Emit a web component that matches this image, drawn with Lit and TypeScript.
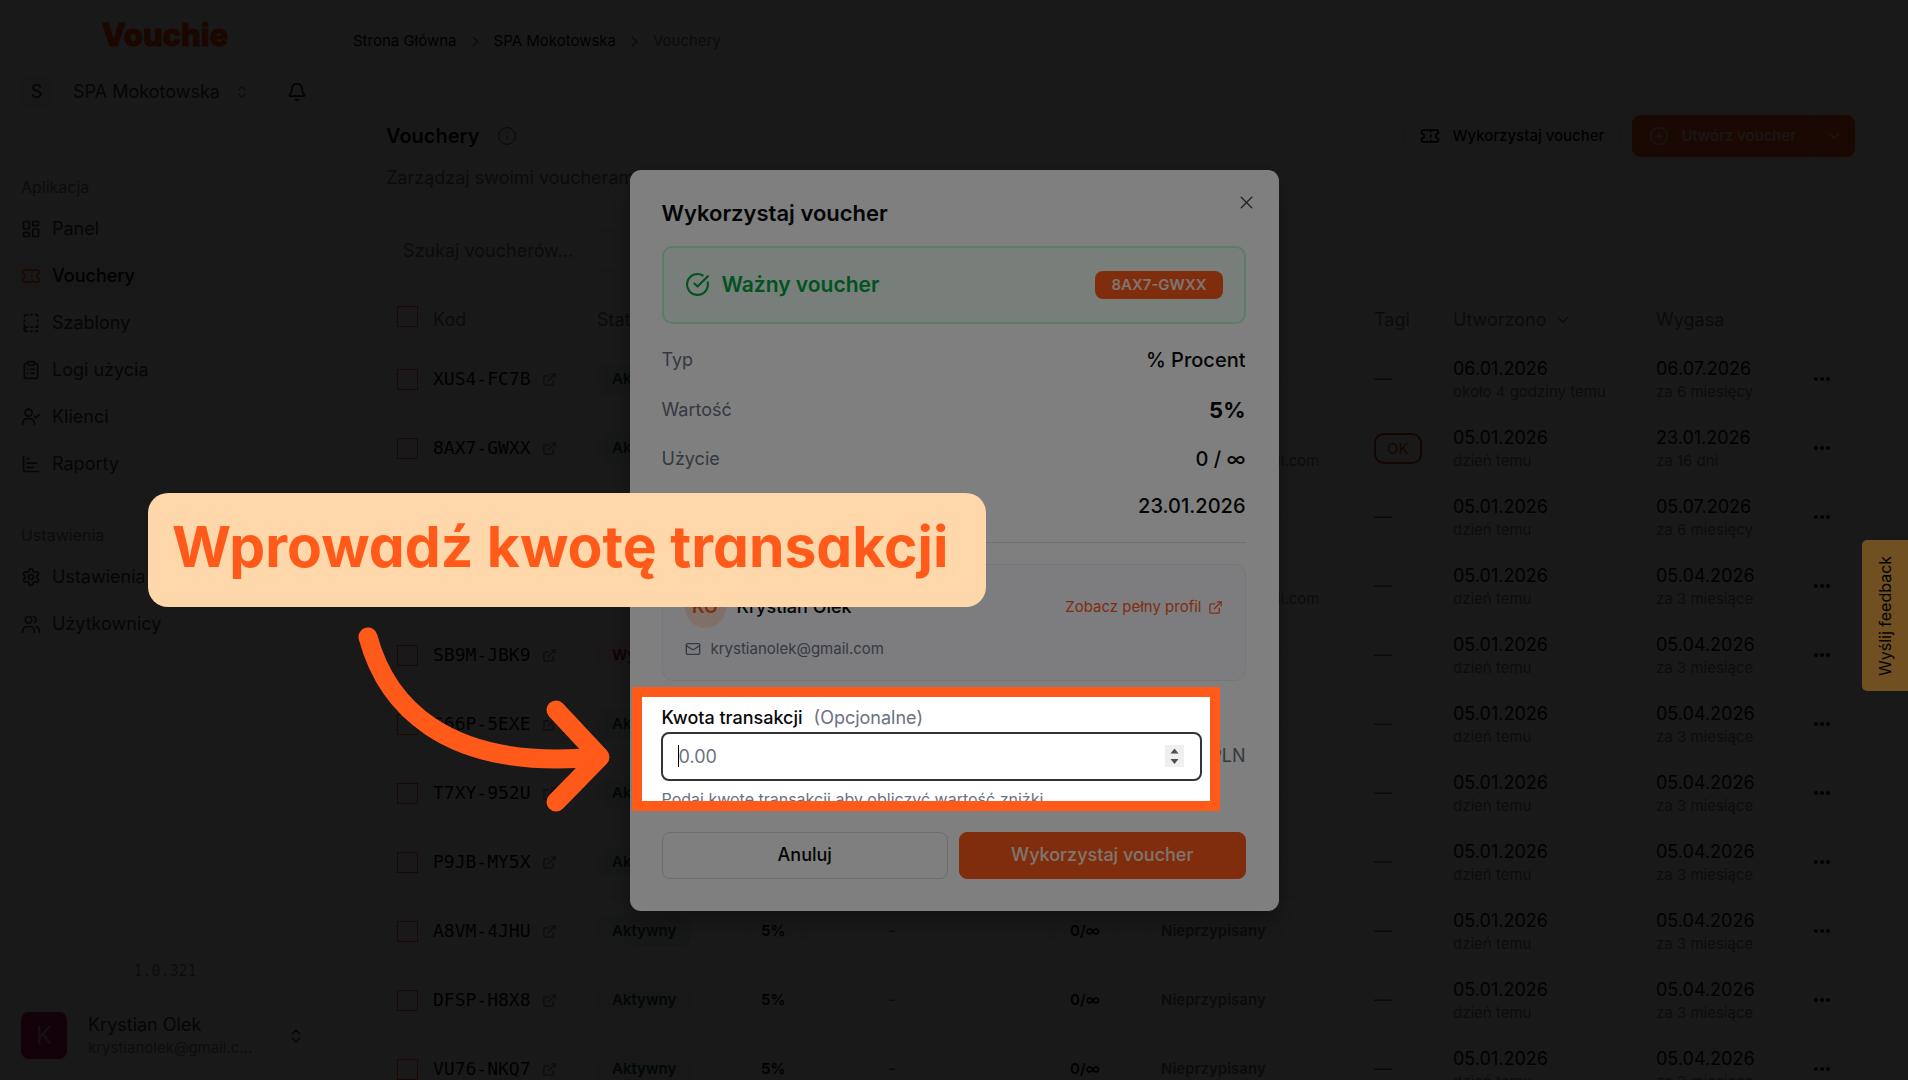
import { LitElement, html, css, svg } from 'lit';
import { customElement } from 'lit/decorators.js';
import { classMap } from 'lit/directives/class-map.js';

const paths: Record<string, string[]> = {
  dashboard: ['M4 3h5a1 1 0 0 1 1 1v7a1 1 0 0 1-1 1H4a1 1 0 0 1-1-1V4a1 1 0 0 1 1-1z', 'M15 3h5a1 1 0 0 1 1 1v3a1 1 0 0 1-1 1h-5a1 1 0 0 1-1-1V4a1 1 0 0 1 1-1z', 'M15 12h5a1 1 0 0 1 1 1v7a1 1 0 0 1-1 1h-5a1 1 0 0 1-1-1v-7a1 1 0 0 1 1-1z', 'M4 16h5a1 1 0 0 1 1 1v3a1 1 0 0 1-1 1H4a1 1 0 0 1-1-1v-3a1 1 0 0 1 1-1z'],
  ticket: ['M2 9a3 3 0 0 1 0 6v2a2 2 0 0 0 2 2h16a2 2 0 0 0 2-2v-2a3 3 0 0 1 0-6V7a2 2 0 0 0-2-2H4a2 2 0 0 0-2 2Z', 'M13 5v2', 'M13 17v2', 'M13 11v2'],
  template: ['M12 17h1.5', 'M12 22h1.5', 'M12 2h1.5', 'M17.5 22H19a1 1 0 0 0 1-1', 'M17.5 2H19a1 1 0 0 1 1 1v1.5', 'M20 14v3h-2.5', 'M20 8.5V10', 'M4 10V8.5', 'M4 19.5V14', 'M4 4.5A2.5 2.5 0 0 1 6.5 2H8', 'M8 22H6.5a1 1 0 0 1 0-5H8'],
  clipboard: ['M9 2h6a1 1 0 0 1 1 1v2a1 1 0 0 1-1 1H9a1 1 0 0 1-1-1V3a1 1 0 0 1 1-1z', 'M16 4h2a2 2 0 0 1 2 2v14a2 2 0 0 1-2 2H6a2 2 0 0 1-2-2V6a2 2 0 0 1 2-2h2', 'M12 11h4', 'M12 16h4', 'M8 11h.01', 'M8 16h.01'],
  client: ['M2 21v-2a6 6 0 0 1 6-5h2a6 6 0 0 1 6 5v2', 'M9 2.500a4 4 0 1 0 0 8.500a4 4 0 0 0 0-8.500', 'm16 11 2 2 4-4'],
  chart: ['M3 3v16a2 2 0 0 0 2 2h16', 'M7 16h8', 'M7 11h12', 'M7 6h3'],
  settings: ['M12.220 2h-.44a2 2 0 0 0-2 2v.18a2 2 0 0 1-1 1.73l-.43.25a2 2 0 0 1-2 0l-.15-.08a2 2 0 0 0-2.730.73l-.22.38a2 2 0 0 0 .73 2.730l.15.1a2 2 0 0 1 1 1.720v.51a2 2 0 0 1-1 1.740l-.15.09a2 2 0 0 0-.73 2.730l.22.38a2 2 0 0 0 2.730.73l.15-.08a2 2 0 0 1 2 0l.43.25a2 2 0 0 1 1 1.730V20a2 2 0 0 0 2 2h.44a2 2 0 0 0 2-2v-.18a2 2 0 0 1 1-1.730l.43-.25a2 2 0 0 1 2 0l.15.08a2 2 0 0 0 2.730-.73l.22-.39a2 2 0 0 0-.73-2.730l-.15-.08a2 2 0 0 1-1-1.740v-.5a2 2 0 0 1 1-1.740l.15-.09a2 2 0 0 0 .73-2.730l-.22-.38a2 2 0 0 0-2.730-.73l-.15.08a2 2 0 0 1-2 0l-.43-.25a2 2 0 0 1-1-1.730V4a2 2 0 0 0-2-2z', 'M12 9a3 3 0 1 0 0 6a3 3 0 0 0 0-6'],
  users: ['M2 22v-2a6 6 0 0 1 6-5h2a6 6 0 0 1 6 5v2', 'M9 3a4 4 0 1 0 0 8a4 4 0 0 0 0-8', 'M15 3a4 4 0 0 1 1 7.500', 'M18 15a6 6 0 0 1 4 5v2'],
  bell: ['M10.268 21a2 2 0 0 0 3.464 0', 'M3.262 15.326A1 1 0 0 0 4 17h16a1 1 0 0 0 .74-1.673C19.410 13.956 18 12.499 18 8A6 6 0 0 0 6 8c0 4.499-1.411 5.956-2.738 7.326'],
  updown: ['m7 15 5 5 5-5', 'm7 9 5-5 5 5'],
  right: ['m9 18 6-6-6-6'],
  down: ['m6 9 6 6 6-6'],
  info: ['M12 2a10 10 0 1 0 0 20a10 10 0 0 0 0-20', 'M12 16v-4', 'M12 8h.01'],
  plus: ['M12 2a10 10 0 1 0 0 20a10 10 0 0 0 0-20', 'M8 12h8', 'M12 8v8'],
  external: ['M15 3h6v6', 'M10 14 21 3', 'M18 13v6a2 2 0 0 1-2 2H5a2 2 0 0 1-2-2V8a2 2 0 0 1 2-2h6'],
  check: ['M21.801 10A10 10 0 1 1 17 3.335', 'm9 11 3 3L22 4'],
  close: ['M18 6 6 18', 'm6 6 12 12'],
  mail: ['M4 4h16a2 2 0 0 1 2 2v12a2 2 0 0 1-2 2H4a2 2 0 0 1-2-2V6a2 2 0 0 1 2-2z', 'm22 7-8.970 5.700a1.940 1.940 0 0 1-2.060 0L2 7'],
};

const icon = (name: string, size = 20, width = 2) => html`<svg width=${size} height=${size} viewBox="0 0 24 24"
  fill="none" stroke="currentColor" stroke-width=${width} stroke-linecap="round" stroke-linejoin="round"
  aria-hidden="true">${paths[name].map((d) => svg`<path d=${d}></path>`)}</svg>`;

const reset = css`
  * { box-sizing: border-box; }
  svg { display: block; flex: none; }
  a { color: inherit; text-decoration: none; }
  button, input { font: inherit; color: inherit; margin: 0; }
  button { display: flex; align-items: center; background: none; border: 0; padding: 0; cursor: pointer; }
  h1, h2, p, ol, ul, dl, dd { margin: 0; padding: 0; }
  li { list-style: none; }
`;

@customElement('side-bar')
class SideBar extends LitElement {
  static styles = [reset, css`
    :host { display: flex; flex-direction: column; width: 331px; flex: none; padding: 18px 10px 21px;
      border-right: 1px solid #e4e4e7; background: #fafafa; color: #3f3f46; font-size: 18px; line-height: 24px; }
    .logo { align-self: center; font-size: 31px; line-height: 34px; font-weight: 800; color: #ff4d00;
      -webkit-text-stroke: 1px #ff4d00; stroke-linejoin: round; }
    .org { display: flex; align-items: center; margin: 24px 11px 0; height: 31px; }
    .switch { gap: 14px; }
    .letter { display: grid; place-items: center; width: 31px; height: 31px; margin-right: 7px; border-radius: 6px; background: #f1f1f3; color: #18181b; }
    .soft { color: #85858d; }
    .bell { margin-left: auto; margin-right: 2px; color: #18181b; }
    .label { margin: 41px 11px 11px; font-size: 16px; line-height: 20px; color: #7a7a82; }
    .label.first { margin-top: 70px; }
    .nav { display: flex; flex-direction: column; gap: 6px; }
    .item { display: flex; align-items: center; gap: 11px; height: 41px; padding: 0 11px; border-radius: 8px; }
    .item.active { background: #f1f1f3; color: #09090b; font-weight: 500; }
    .item.active svg { color: #ff5a1a; }
    .version { margin-top: auto; text-align: center; font: 15px/20px "DejaVu Sans Mono", monospace; color: #85858d; }
    .user { margin: 31px 11px 0; height: 47px; gap: 21px; text-align: left; }
    .avatar { display: grid; place-items: center; width: 46px; height: 47px; border-radius: 8px; background: #c2185b; color: #d8a0b8; font-size: 24px; }
    .who { flex: 1; min-width: 0; }
    .mail { display: block; font-size: 15px; line-height: 21px; color: #85858d; }
    .user svg { margin-right: 4px; margin-left: -21px; }
  `];
  main = [['dashboard', 'Panel'], ['ticket', 'Vouchery'], ['template', 'Szablony'], ['clipboard', 'Logi użycia'], ['client', 'Klienci'], ['chart', 'Raporty']];
  more = [['settings', 'Ustawienia'], ['users', 'Użytkownicy']];
  links(items: string[][]) {
    return html`<nav class="nav">${items.map(([i, t]) => html`
      <a href="#" class=${classMap({ item: true, active: t === 'Vouchery' })}>${icon(i)}<span>${t}</span></a>`)}</nav>`;
  }
  render() {
    return html`
      <a href="#" class="logo">Vouchie</a>
      <div class="org">
        <button class="switch"><span class="letter">S</span><span>SPA Mokotowska</span><span class="soft">${icon('updown', 16)}</span></button>
        <button class="bell" aria-label="Powiadomienia">${icon('bell')}</button>
      </div>
      <div class="label first">Aplikacja</div>
      ${this.links(this.main)}
      <div class="label">Ustawienia</div>
      ${this.links(this.more)}
      <div class="version">1.0.321</div>
      <button class="user"><span class="avatar">K</span>
        <span class="who">Krystian Olek<span class="mail">krystianolek@gmail.c...</span></span>${icon('updown', 18)}</button>`;
  }
}

interface Voucher { code: string; created: string; ago: string; expires: string; left: string; expired?: boolean; client?: boolean; tag?: string }
const vouchers: Voucher[] = [
  { code: 'XUS4-FC7B', created: '06.01.2026', ago: 'około 4 godziny temu', expires: '06.07.2026', left: 'za 6 miesięcy' },
  { code: '8AX7-GWXX', created: '05.01.2026', ago: 'dzień temu', expires: '23.01.2026', left: 'za 16 dni', client: true, tag: 'OK' },
  { code: 'M3KD-7PQA', created: '05.01.2026', ago: 'dzień temu', expires: '05.07.2026', left: 'za 6 miesięcy' },
  { code: 'R5TN-2WLE', created: '05.01.2026', ago: 'dzień temu', expires: '05.04.2026', left: 'za 3 miesiące', client: true },
  ...['SB9M-JBK9', 'S66P-5EXE', 'T7XY-952U', 'P9JB-MY5X', 'A8VM-4JHU', 'DFSP-H8X8', 'VU76-NKQ7'].map((code, i) => ({
    code, created: '05.01.2026', ago: 'dzień temu', expires: '05.04.2026', left: 'za 3 miesiące', expired: i === 0,
  })),
];

@customElement('voucher-table')
class VoucherTable extends LitElement {
  static styles = [reset, css`
    :host { display: block; }
    table { width: 100%; table-layout: fixed; border-collapse: separate; border-spacing: 0; border: 1px solid #e9e9ec; border-radius: 8px; font-size: 18px; line-height: 26px; }
    th { height: 51px; padding: 3px 0 0 10px; text-align: left; font-weight: 400; color: #71717a; }
    td { height: 69px; padding: 0 0 0 10px; border-top: 1px solid #e9e9ec; color: #09090b; white-space: nowrap; }
    input { appearance: none; display: block; width: 21px; height: 21px; border: 1px solid #ff5a1a; }
    th input { margin-bottom: 8px; }
    .c1 { width: 36px; } .c2 { width: 164px; } .c3 { width: 149px; } .c4 { width: 142px; } .c5 { width: 167px; } .c6 { width: 91px; }
    .c8 { width: 79px; } .c9 { width: 203px; } .c10 { width: 156px; } .c11 { width: 52px; }
    .code { display: flex; align-items: center; gap: 11px; font-family: "DejaVu Sans Mono", monospace; }
    .code svg, .soft { color: #71717a; }
    .pill { display: inline-block; padding: 0 14px; font-size: 15px; line-height: 28px; font-weight: 600; border: 1px solid transparent; border-radius: 8px; }
    .ok { background: #e6f6ec; color: #14532d; }
    .bad { background: #fdecec; color: #991b1b; }
    .line { border-color: #f0f0f2; }
    .tag { padding: 0 11px; border: 2px solid #c2410c; border-radius: 10px; line-height: 27px; font-weight: 400; color: #c2410c; }
    .sort { display: flex; align-items: center; gap: 8px; }
    .sub { font-size: 15px; line-height: 20px; color: #7a7a82; }
  `];
  render() {
    return html`<table>
      <colgroup>${[1, 2, 3, 4, 5, 6, 7, 8, 9, 10, 11].map((n) => html`<col class="c${n}">`)}</colgroup>
      <thead><tr>
        <th><input type="checkbox" aria-label="Zaznacz wszystkie"></th><th>Kod</th><th>Status</th><th></th><th></th><th></th><th></th>
        <th>Tagi</th><th><span class="sort">Utworzono ${icon('down', 18)}</span></th><th>Wygasa</th><th></th>
      </tr></thead>
      <tbody>${vouchers.map((v) => html`<tr>
        <td><input type="checkbox" aria-label=${v.code}></td>
        <td><a class="code" href="#">${v.code}${icon('external', 15)}</a></td>
        <td><span class="pill ${v.expired ? 'bad' : 'ok'}">${v.expired ? 'Wygasły' : 'Aktywny'}</span></td>
        <td><span class="pill line">5%</span></td>
        <td class="soft">-</td>
        <td><span class="pill line">0/∞</span></td>
        <td>${v.client ? html`<div>Krystian Olek</div><div class="sub">krystianolek@gmail.com</div>` : html`<span class="pill line soft">Nieprzypisany</span>`}</td>
        <td class="soft">${v.tag ? html`<span class="pill tag">${v.tag}</span>` : '—'}</td>
        <td>${v.created}<div class="sub">${v.ago}</div></td>
        <td>${v.expires}<div class="sub">${v.left}</div></td>
        <td><button aria-label="Więcej"><svg width="20" height="20" viewBox="0 0 20 20" fill="currentColor"><circle cx="4" cy="10" r="2"/><circle cx="10" cy="10" r="2"/><circle cx="16" cy="10" r="2"/></svg></button></td>
      </tr>`)}</tbody></table>`;
  }
}

@customElement('voucher-page')
class VoucherPage extends LitElement {
  static styles = [reset, css`
    :host { display: block; flex: 1; min-width: 0; font-size: 18px; line-height: 26px; color: #09090b; }
    .crumbs { display: flex; align-items: center; gap: 10px; height: 82px; padding-left: 22px; font-size: 15px; line-height: 20px; }
    .crumbs li { display: flex; align-items: center; gap: 10px; }
    .crumbs svg, .muted { color: #71717a; }
    .content { padding: 33px 53px 0 55px; }
    .top { display: flex; align-items: center; gap: 11px; height: 42px; }
    h1 { font-size: 20px; line-height: 26px; font-weight: 600; margin-right: 6px; }
    .info { margin-right: auto; color: #71717a; }
    .btn { height: 42px; padding: 0 16px; gap: 12px; border-radius: 8px; font-size: 15px; font-weight: 500; border: 1px solid #e9e9ec; }
    .split { display: flex; }
    .primary { background: #ff5a1a; border-color: #ff5a1a; color: #ffe3d6; }
    .main { border-radius: 8px 0 0 8px; }
    .more { border-radius: 0 8px 8px 0; padding: 0 11px; }
    .desc { margin-top: 8px; color: #71717a; }
    .search { display: block; width: 460px; max-width: 100%; height: 41px; margin: 39px 0 21px; padding: 0 16px; border: 1px solid #e4e4e7; border-radius: 8px; background: none; }
    .search::placeholder { color: #71717a; opacity: 1; }
  `];
  render() {
    return html`
      <nav aria-label="Okruszki"><ol class="crumbs">
        <li><a href="#">Strona Główna</a>${icon('right', 17)}</li>
        <li><a href="#">SPA Mokotowska</a>${icon('right', 17)}</li>
        <li class="muted">Vouchery</li></ol></nav>
      <div class="content">
        <div class="top">
          <h1>Vouchery</h1><span class="info">${icon('info', 20, 1.5)}</span>
          <button class="btn">${icon('ticket')}Wykorzystaj voucher</button>
          <div class="split"><button class="btn primary main">${icon('plus', 20, 1.5)}Utwórz voucher</button><button class="btn primary more" aria-label="Więcej opcji">${icon('down', 18)}</button></div>
        </div>
        <p class="desc">Zarządzaj swoimi voucherami</p>
        <input class="search" type="text" aria-label="Szukaj voucherów" placeholder="Szukaj voucherów...">
        <voucher-table></voucher-table>
      </div>`;
  }
}

@customElement('redeem-dialog')
class RedeemDialog extends LitElement {
  static styles = [reset, css`
    :host { display: block; position: relative; width: 649px; padding: 31px 33px 32px 32px; border-radius: 11px; background: #fff;
      color: #09090b; font-size: 18px; line-height: 24px; box-shadow: 0 10px 24px rgba(0, 0, 0, .3); }
    h2 { font-size: 22px; line-height: 25px; font-weight: 600; }
    .close { position: absolute; top: 22px; right: 22px; color: #3f3f46; }
    .valid { display: flex; align-items: center; gap: 12px; height: 78px; margin-top: 20px; padding: 0 21px; border: 2px solid #b9f8cf; border-radius: 10px;
      background: #f0fdf4; color: #00a63e; font-size: 21px; font-weight: 600; }
    .badge { margin-left: auto; padding: 0 16px; border-radius: 8px; background: #ff5a1a; color: #ffe9df; font-size: 15px; line-height: 28px; font-weight: 600; }
    dl { display: grid; gap: 16px; padding: 21px 0 20px; border-bottom: 1px solid #e4e4e7; }
    .row { display: flex; justify-content: space-between; align-items: center; height: 31px; }
    .row.tall { height: 36px; }
    dt, .grey { color: #6a7282; }
    dd { font-size: 20px; font-weight: 500; }
    .tall dd { font-size: 22px; font-weight: 700; }
    .card { height: 117px; margin-top: 21px; padding: 22px; border: 1px solid #eceef2; border-radius: 11px; background: #fafbff; }
    .person { display: flex; align-items: center; gap: 11px; height: 41px; font-weight: 500; }
    .initials { display: grid; place-items: center; width: 41px; height: 41px; border-radius: 50%; background: #ffe0d5; color: #ff5a1a; font-size: 18px; font-weight: 600; }
    .profile { display: flex; align-items: center; gap: 6px; margin-left: auto; font-size: 15px; font-weight: 400; color: #ff5a1a; }
    .contact { display: flex; align-items: center; gap: 10px; margin-top: 10px; font-size: 15px; line-height: 22px; color: #6a7282; }
    .field { position: relative; margin-top: 25px; }
    label { display: flex; gap: 11px; font-weight: 500; }
    label .grey { font-weight: 400; }
    .entry { display: flex; align-items: center; justify-content: space-between; margin-top: 2px; }
    .box { position: relative; width: 541px; margin-left: -1px; }
    .box input { display: block; width: 100%; height: 49px; padding: 0 16px; border: 2px solid #333338; border-radius: 8px; outline: 0; background: #fff; appearance: textfield; }
    .box input::placeholder { color: #6a7282; opacity: 1; }
    .box input::-webkit-inner-spin-button { appearance: none; }
    .caret { position: absolute; left: 17px; top: 13px; width: 1px; height: 22px; background: #000; }
    .spin { position: absolute; right: 18px; top: 13px; background: #efefef; }
    .hint { margin-top: 8px; font-size: 16px; line-height: 20px; color: #6a7282; }
    .spot { position: absolute; z-index: 5; left: -30px; right: 26px; top: -19px; bottom: -2px; border: 10px solid #ff5a1a;
      box-shadow: 0 0 0 4000px rgba(0, 0, 0, .5); pointer-events: none; }
    .actions { display: flex; gap: 11px; margin-top: 23px; }
    .actions button { flex: 1; justify-content: center; height: 47px; border: 1px solid #d9d9de; border-radius: 8px; font-weight: 500; }
    .actions .go { background: #ff5a1a; border-color: #ff5a1a; color: #ffe9df; }
  `];
  render() {
    return html`
      <h2>Wykorzystaj voucher</h2>
      <button class="close" aria-label="Zamknij">${icon('close', 21, 1.5)}</button>
      <div class="valid">${icon('check', 25)}<span>Ważny voucher</span><span class="badge">8AX7-GWXX</span></div>
      <dl>
        <div class="row"><dt>Typ</dt><dd>% Procent</dd></div>
        <div class="row tall"><dt>Wartość</dt><dd>5%</dd></div>
        <div class="row"><dt>Użycie</dt><dd>0 / ∞</dd></div>
        <div class="row"><dt>Wygasa</dt><dd>23.01.2026</dd></div>
      </dl>
      <section class="card">
        <div class="person"><span class="initials">KO</span>Krystian Olek<a class="profile" href="#">Zobacz pełny profil ${icon('external', 15)}</a></div>
        <div class="contact">${icon('mail', 16)}krystianolek@gmail.com</div>
      </section>
      <div class="field">
        <label for="amount">Kwota transakcji <span class="grey">(Opcjonalne)</span></label>
        <div class="entry">
          <div class="box"><input id="amount" type="number" step="0.01" placeholder="0.00"><span class="caret"></span>
            <svg class="spin" width="19" height="22" viewBox="0 0 19 22" fill="#505050" aria-hidden="true"><path d="M9.500 3.500 13.500 8.500H5.500Z"></path><path d="M9.500 19 13.500 14H5.500Z"></path></svg></div>
          <span class="grey">PLN</span></div>
        <p class="hint">Podaj kwotę transakcji aby obliczyć wartość zniżki</p>
        <div class="spot"></div>
      </div>
      <div class="actions"><button>Anuluj</button><button class="go">Wykorzystaj voucher</button></div>`;
  }
}

@customElement('app-root')
class AppRoot extends LitElement {
  static styles = [reset, css`
    :host { display: block; position: relative; height: 100vh; overflow: hidden; background: #fff; font-family: Inter, "Liberation Sans", sans-serif; }
    .shell { display: flex; height: 100%; }
    .backdrop { position: absolute; inset: 0; background: rgba(0, 0, 0, .8); }
    .feedback { position: absolute; right: 0; top: 540px; width: 46px; height: 151px; justify-content: center; border-radius: 0 5px 5px 0; background: #e09e42;
      color: #09090b; writing-mode: vertical-rl; transform: rotate(180deg); font-size: 16px; }
    .layer { position: absolute; inset: 0; z-index: 1; display: grid; place-items: center; }
    .callout { position: absolute; z-index: 2; left: 148px; top: 493px; width: 838px; height: 114px; padding-left: 24px; border-radius: 20px; background: #fed7aa;
      color: #ff5a1a; font-size: 57px; line-height: 107px; font-weight: 700; font-feature-settings: "cv11"; white-space: nowrap; }
    .arrow { position: absolute; z-index: 2; left: 350px; top: 620px; }
  `];
  render() {
    return html`
      <div class="shell"><side-bar></side-bar><voucher-page></voucher-page></div>
      <div class="backdrop"></div>
      <button class="feedback">Wyślij feedback</button>
      <div class="layer"><redeem-dialog role="dialog" aria-label="Wykorzystaj voucher"></redeem-dialog></div>
      <div class="callout">Wprowadź kwotę transakcji</div>
      <svg class="arrow" width="270" height="200" viewBox="350 620 270 200" fill="none" stroke="#ff5a1a" stroke-width="19" stroke-linecap="round" stroke-linejoin="round" aria-hidden="true">
        <path d="M368 637C385 700 440 772 598 757"></path><path d="M556 710L600 757L556 802"></path></svg>`;
  }
}
